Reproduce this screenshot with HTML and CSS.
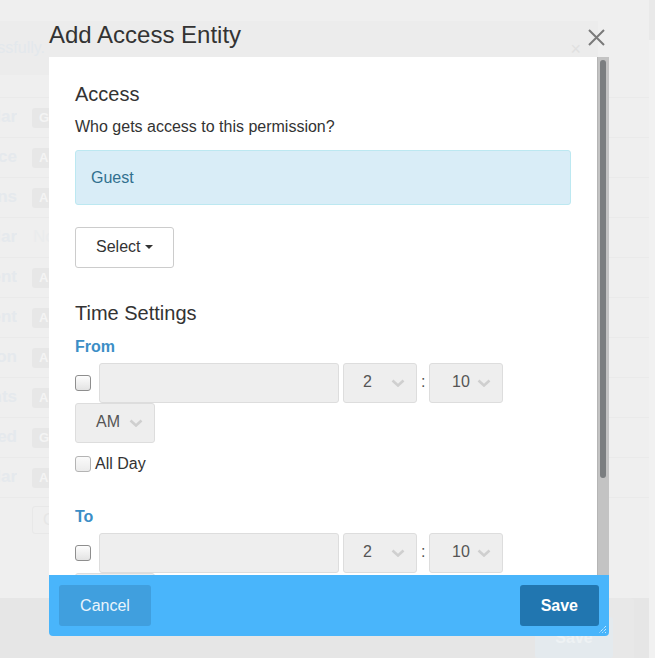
FILE: index.html
```html
<!DOCTYPE html>
<html>
<head>
<meta charset="utf-8">
<link rel="stylesheet" href="styles.css">
</head>
<body>
<div class="page">
  <div class="page-main">
    <div class="bg-alert">
      <div class="bg-alert-text"><span>Saved successfully.</span></div>
      <span class="bg-alert-x">×</span>
    </div>
    <div class="bg-rows">
      <div class="bg-row"><div class="bg-label"><span>Regular</span></div><span class="bg-badge">G</span></div>
      <div class="bg-row"><div class="bg-label"><span>Service</span></div><span class="bg-badge">A</span></div>
      <div class="bg-row"><div class="bg-label"><span>Options</span></div><span class="bg-badge">A</span></div>
      <div class="bg-row"><div class="bg-label"><span>Calendar</span></div><span class="bg-none">None</span></div>
      <div class="bg-row"><div class="bg-label"><span>Client</span></div><span class="bg-badge">A</span></div>
      <div class="bg-row"><div class="bg-label"><span>Content</span></div><span class="bg-badge">A</span></div>
      <div class="bg-row"><div class="bg-label"><span>Location</span></div><span class="bg-badge">A</span></div>
      <div class="bg-row"><div class="bg-label"><span>Events</span></div><span class="bg-badge">A</span></div>
      <div class="bg-row"><div class="bg-label"><span>Archived</span></div><span class="bg-badge">G</span></div>
      <div class="bg-row"><div class="bg-label"><span>Similar</span></div><span class="bg-badge">A</span></div>
      <div class="bg-btn-row"><span class="bg-btn">Cancel</span></div>
    </div>
  </div>
  <div class="page-foot">
    <div class="bg-save-wrap"><span class="bg-save">Save</span></div>
  </div>
</div>
<div class="page-scroll"><div class="page-scroll-thumb"></div></div>

<div class="dialog">
  <div class="dialog-head">
    <h2 class="dialog-title">Add Access Entity</h2>
    <span class="dialog-close">
      <svg width="17" height="17" viewBox="0 0 17 17"><path d="M1 1 L16 16 M16 1 L1 16" stroke="#7a7a7a" stroke-width="2" fill="none"/></svg>
    </span>
  </div>
  <div class="body-wrap">
    <div class="dialog-body">
      <h3 class="section-title">Access</h3>
      <p class="help">Who gets access to this permission?</p>
      <div class="alert-info">Guest</div>
      <button class="btn-select">Select<span class="caret"></span></button>

      <h3 class="section-title time-title">Time Settings</h3>
      <label class="field-label">From</label>
      <div class="time-row">
        <input type="checkbox" class="cb">
        <div class="date-input"></div>
        <div class="sel sel-hour"><span>2</span><svg class="chev" width="14" height="8" viewBox="0 0 14 8"><path d="M1.5 1.5 L7 6.5 L12.5 1.5" stroke="#cfcfcf" stroke-width="2.6" fill="none"/></svg></div>
        <span class="colon">:</span>
        <div class="sel sel-min"><span>10</span><svg class="chev" width="14" height="8" viewBox="0 0 14 8"><path d="M1.5 1.5 L7 6.5 L12.5 1.5" stroke="#cfcfcf" stroke-width="2.6" fill="none"/></svg></div>
        <div class="sel sel-ampm"><span>AM</span><svg class="chev" width="14" height="8" viewBox="0 0 14 8"><path d="M1.5 1.5 L7 6.5 L12.5 1.5" stroke="#cfcfcf" stroke-width="2.6" fill="none"/></svg></div>
      </div>
      <label class="allday"><input type="checkbox" class="cb cb-light">All Day</label>

      <label class="field-label to-label">To</label>
      <div class="time-row">
        <input type="checkbox" class="cb">
        <div class="date-input"></div>
        <div class="sel sel-hour"><span>2</span><svg class="chev" width="14" height="8" viewBox="0 0 14 8"><path d="M1.5 1.5 L7 6.5 L12.5 1.5" stroke="#cfcfcf" stroke-width="2.6" fill="none"/></svg></div>
        <span class="colon">:</span>
        <div class="sel sel-min"><span>10</span><svg class="chev" width="14" height="8" viewBox="0 0 14 8"><path d="M1.5 1.5 L7 6.5 L12.5 1.5" stroke="#cfcfcf" stroke-width="2.6" fill="none"/></svg></div>
        <div class="sel sel-ampm"><span>AM</span><svg class="chev" width="14" height="8" viewBox="0 0 14 8"><path d="M1.5 1.5 L7 6.5 L12.5 1.5" stroke="#cfcfcf" stroke-width="2.6" fill="none"/></svg></div>
      </div>
      <label class="allday"><input type="checkbox" class="cb cb-light">All Day</label>
    </div>
    <div class="vscroll"><div class="vscroll-thumb"></div></div>
  </div>
  <div class="dialog-foot">
    <button class="btn btn-cancel">Cancel</button>
    <button class="btn btn-save">Save</button>
    <svg class="grip" width="9" height="9" viewBox="0 0 9 9"><path d="M8 1 L1 8 M8 4 L4 8 M8 7 L7 8" stroke="#ffffff" stroke-width="1" stroke-dasharray="1 1" fill="none"/></svg>
  </div>
</div>
</body>
</html>
```

FILE: styles.css
```css
* { box-sizing: border-box; }

html, body {
  margin: 0;
  padding: 0;
}

body {
  width: 655px;
  height: 658px;
  overflow: hidden;
  position: relative;
  background: #efefef;
  font-family: "Liberation Sans", Arial, sans-serif;
  font-size: 16px;
  line-height: 1.42857;
  color: #333;
}

/* ---------- faded page behind the dialog ---------- */
.page {
  width: 649px;
  height: 658px;
  display: flex;
  flex-direction: column;
}

.page-main {
  height: 598px;
  padding-top: 21px;
}

.bg-alert {
  height: 54px;
  margin-right: 51px;
  background: #ececec;
  display: flex;
  align-items: flex-start;
  justify-content: space-between;
  padding-top: 16px;
}

.bg-alert-text {
  width: 45px;
  overflow: hidden;
  display: flex;
  justify-content: flex-end;
  white-space: nowrap;
  color: #e3e8ec;
  font-size: 16px;
}

.bg-alert-x {
  color: #e0e0e0;
  font-size: 18px;
  line-height: 16px;
  margin-right: 17px;
  margin-top: 4px;
}

.bg-rows {
  margin-top: 22px;
}

.bg-row {
  height: 40px;
  border-top: 1px solid #eaeaea;
  display: flex;
  align-items: center;
}

.bg-label {
  width: 17px;
  overflow: hidden;
  display: flex;
  justify-content: flex-end;
  white-space: nowrap;
  color: #e5e9ed;
  font-weight: bold;
  font-size: 17px;
  flex: none;
}

.bg-badge {
  margin-left: 15px;
  width: 40px;
  height: 20px;
  border-radius: 3px;
  background: #e7e7e7;
  color: #f4f4f4;
  font-weight: bold;
  font-size: 13px;
  line-height: 20px;
  padding-left: 7px;
}

.bg-none {
  margin-left: 16px;
  color: #eaeced;
  font-size: 17px;
}

.bg-btn-row {
  border-top: 1px solid #eaeaea;
  padding-top: 8px;
  padding-left: 32px;
}

.bg-btn {
  display: inline-block;
  height: 28px;
  width: 70px;
  border: 1px solid #e8e8e8;
  border-radius: 3px;
  color: #e6e6e6;
  font-size: 16px;
  line-height: 26px;
  padding-left: 10px;
}

.page-foot {
  height: 60px;
  background: #e6e6e6;
  display: flex;
  justify-content: flex-end;
  padding-right: 15px;
}

.bg-save-wrap {
  width: 99px;
  background: #e8e8e8;
  border-radius: 4px 4px 0 0;
  padding-top: 19px;
}

.bg-save {
  display: block;
  width: 78px;
  height: 41px;
  background: #e4eaee;
  border-radius: 3px;
  color: #eef2f4;
  font-weight: bold;
  text-align: center;
  line-height: 41px;
}

.page-scroll {
  position: absolute;
  right: 0;
  top: 0;
  width: 6px;
  height: 658px;
  background: #f1f1f1;
}

.page-scroll-thumb {
  height: 40px;
  background: #e9e9e9;
}

/* ---------- dialog ---------- */
.dialog {
  position: absolute;
  left: 49px;
  top: 0;
  width: 560px;
}

.dialog-head {
  height: 57px;
  display: flex;
  justify-content: space-between;
  align-items: flex-start;
  padding: 21px 4px 0 0;
}

.dialog-title {
  margin: 0;
  font-size: 24px;
  font-weight: normal;
  line-height: 28px;
  color: #333;
}

.dialog-close {
  margin-top: 8px;
  display: block;
  width: 17px;
  height: 17px;
}

.dialog-close svg { display: block; }

.body-wrap {
  position: relative;
  height: 518px;
  background: #fff;
}

.dialog-body {
  height: 518px;
  overflow: hidden;
  padding: 26px 38px 54px 26px;
}

.vscroll {
  position: absolute;
  top: 0;
  right: 0;
  width: 12px;
  height: 518px;
  background: #c3c3c3;
  border-left: 1px solid #b5b5b5;
  padding: 3px 3px 0 2px;
}

.vscroll-thumb {
  height: 418px;
  background: #7b7e80;
  border-radius: 4px;
}

.section-title {
  margin: 0 0 11px 0;
  font-size: 20px;
  font-weight: normal;
  line-height: 22px;
  color: #333;
}

.help {
  margin: 0 0 11px 0;
}

.alert-info {
  background: #d9edf7;
  border: 1px solid #bce8f1;
  border-radius: 3px;
  color: #31708f;
  padding: 15px;
  line-height: 24px;
  height: 55px;
  margin-bottom: 22px;
}

.btn-select {
  display: inline-flex;
  align-items: center;
  height: 41px;
  padding: 0 20px;
  border: 1px solid #ccc;
  border-radius: 3px;
  background: #fff;
  color: #333;
  font-family: inherit;
  font-size: 16px;
}

.caret {
  display: inline-block;
  width: 0;
  height: 0;
  margin-left: 5px;
  border-top: 4px solid #333;
  border-left: 4px solid transparent;
  border-right: 4px solid transparent;
}

.time-title {
  margin-top: 34px;
}

.field-label {
  display: block;
  margin-bottom: 5px;
  font-weight: bold;
  color: #3b8ec6;
  line-height: 24px;
}

.field-label + .time-row { margin-top: -1px; }

.to-label {
  margin-top: 29px;
}

.time-row {
  display: flex;
  flex-wrap: wrap;
  align-items: center;
  column-gap: 4px;
}

.cb {
  appearance: none;
  -webkit-appearance: none;
  width: 16px;
  height: 16px;
  margin: 0 4px 0 0;
  border: 1px solid #8e8e8e;
  border-radius: 3px;
  background: linear-gradient(#fdfdfd, #e3e3e3);
  flex: none;
}

.cb-light {
  border-color: #b4b4b4;
  background: linear-gradient(#fafafa, #ebebeb);
}

.date-input {
  width: 240px;
  height: 40px;
  background: #eee;
  border: 1px solid #ddd;
  border-radius: 3px;
}

.sel {
  height: 40px;
  background: #eee;
  border: 1px solid #ddd;
  border-radius: 3px;
  display: flex;
  align-items: center;
  justify-content: space-between;
  padding: 0 11px 0 19px;
  color: #555;
}

.chev { display: block; }

.sel-hour, .sel-min { width: 74px; }
.sel-min { padding-left: 22px; }
.sel-ampm { width: 80px; padding-left: 20px; }

.colon {
  color: #555;
  width: 4px;
}

.allday {
  display: flex;
  align-items: center;
  margin-top: 10px;
  color: #333;
}

.allday .cb { margin-right: 4px; }

.dialog-foot {
  position: relative;
  height: 61px;
  background: #49b5fb;
  border-radius: 0 0 4px 4px;
  display: flex;
  justify-content: space-between;
  align-items: center;
  padding: 0 10px;
}

.btn {
  height: 41px;
  padding: 0 20px;
  border: 1px solid transparent;
  border-radius: 3px;
  font-family: inherit;
  font-size: 16px;
}

.btn-cancel {
  width: 92px;
  background: #409fde;
  color: #e9f4fc;
}

.btn-save {
  background: #2176b0;
  color: #fff;
  font-weight: bold;
}

.grip {
  position: absolute;
  right: 2px;
  bottom: 2px;
}
```
